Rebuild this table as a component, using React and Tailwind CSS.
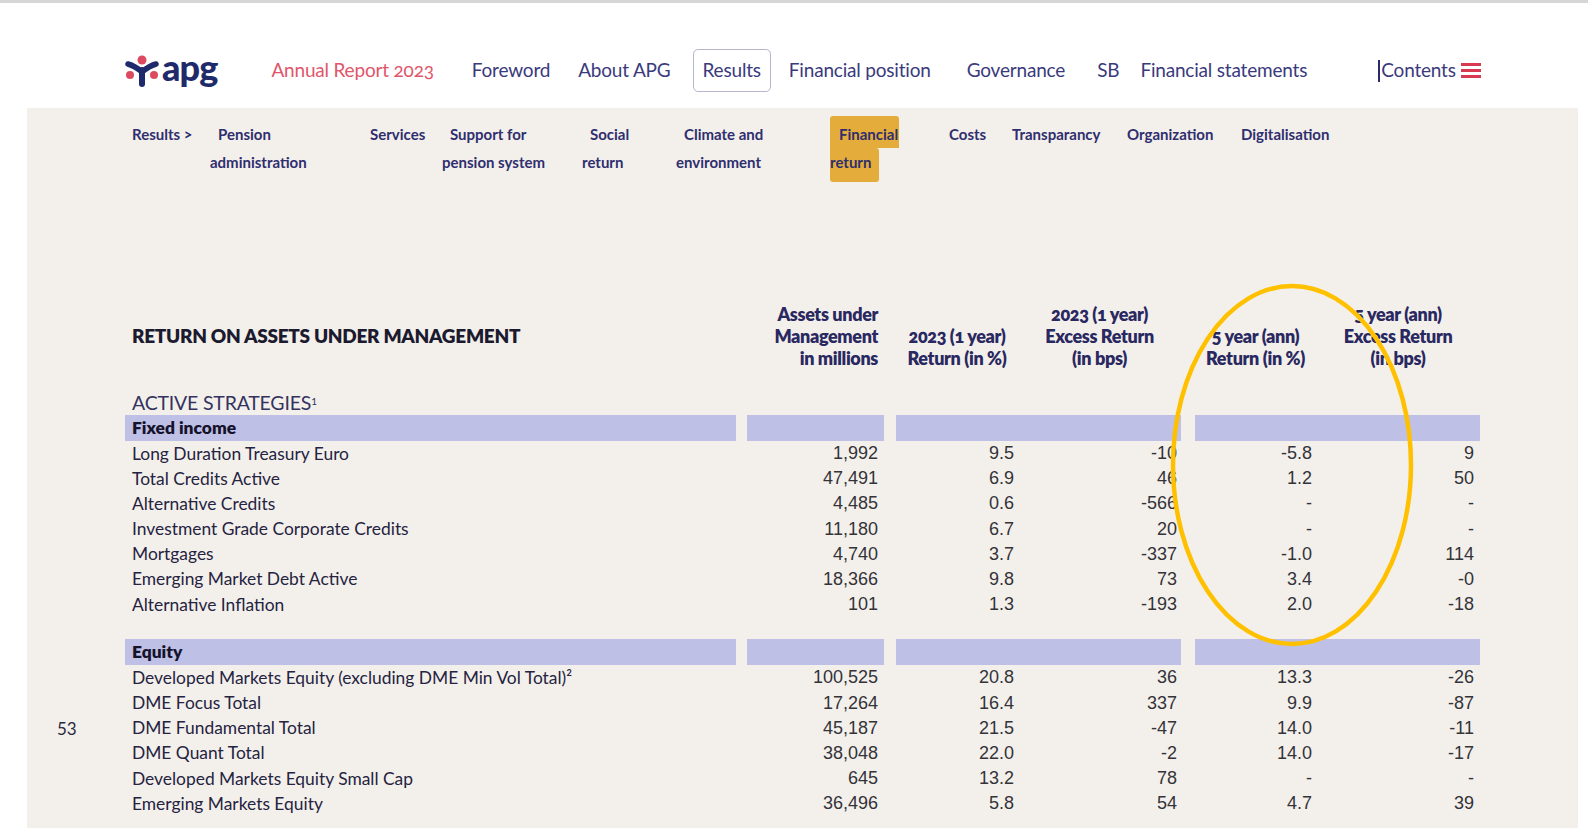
import React from 'react';

const fixedIncome = [
  ['Long Duration Treasury Euro', '1,992', '9.5', '-10', '-5.8', '9'],
  ['Total Credits Active', '47,491', '6.9', '46', '1.2', '50'],
  ['Alternative Credits', '4,485', '0.6', '-566', '-', '-'],
  ['Investment Grade Corporate Credits', '11,180', '6.7', '20', '-', '-'],
  ['Mortgages', '4,740', '3.7', '-337', '-1.0', '114'],
  ['Emerging Market Debt Active', '18,366', '9.8', '73', '3.4', '-0'],
  ['Alternative Inflation', '101', '1.3', '-193', '2.0', '-18'],
];

const equity = [
  ['Developed Markets Equity (excluding DME Min Vol Total)²', '100,525', '20.8', '36', '13.3', '-26'],
  ['DME Focus Total', '17,264', '16.4', '337', '9.9', '-87'],
  ['DME Fundamental Total', '45,187', '21.5', '-47', '14.0', '-11', '53'],
  ['DME Quant Total', '38,048', '22.0', '-2', '14.0', '-17'],
  ['Developed Markets Equity Small Cap', '645', '13.2', '78', '-', '-'],
  ['Emerging Markets Equity', '36,496', '5.8', '54', '4.7', '39'],
];

const subNav = [
  ['Pension', 'administration'],
  ['Services'],
  ['Support for', 'pension system'],
  ['Social', 'return'],
  ['Climate and', 'environment'],
  ['Financial', 'return', true],
  ['Costs'],
  ['Transparancy'],
  ['Organization'],
  ['Digitalisation'],
];

const Logo = () => (
  <div className="flex items-center gap-[3px]">
    <svg width="34" height="32" viewBox="0 0 34 32">
      <circle cx="17" cy="5" r="4.5" fill="#dc4a60" />
      <path d="M3 9 Q10 11 17 17 Q24 11 31 9" fill="none" stroke="#1f2a6b" strokeWidth="5.5" strokeLinecap="round" />
      <path d="M17 15 V29" stroke="#1f2a6b" strokeWidth="6" strokeLinecap="round" />
      <circle cx="5" cy="20" r="4" fill="#dc4a60" />
      <circle cx="29" cy="20" r="4" fill="#dc4a60" />
    </svg>
    <span className="-mt-[8px] text-[36px] leading-none font-black tracking-tight text-[#1f2a6b]">apg</span>
  </div>
);

const num = "font-['Liberation_Sans',Arial,sans-serif] text-[18px] text-[#333338]";

const Row = ({ cells }) => (
  <div className="flex h-[25.2px] items-center">
    <div className="w-[68px] text-[17px] text-[#2b2940]">{cells[6] || ''}</div>
    <div className="w-[611px] pl-[7px] text-[17.4px] text-[#25233f]">{cells[0]}</div>
    <div className={`ml-[11px] w-[137px] pr-[6px] text-right ${num}`}>{cells[1]}</div>
    <div className={`ml-[12px] flex w-[285px] ${num}`}>
      <div className="w-[122px] pr-[4px] text-right">{cells[2]}</div>
      <div className="w-[163px] pr-[4px] text-right">{cells[3]}</div>
    </div>
    <div className={`ml-[14px] flex w-[285px] ${num}`}>
      <div className="w-[121px] pr-[4px] text-right">{cells[4]}</div>
      <div className="w-[164px] pr-[6px] text-right">{cells[5]}</div>
    </div>
  </div>
);

const Band = ({ label }) => (
  <div className="flex h-[26px] items-center">
    <div className="w-[68px]" />
    <div className="flex h-full w-[611px] items-center bg-[#bfc0e6] pl-[7px] text-[17.4px] font-extrabold text-[#15132b]">{label}</div>
    <div className="ml-[11px] h-full w-[137px] bg-[#bfc0e6]" />
    <div className="ml-[12px] h-full w-[285px] bg-[#bfc0e6]" />
    <div className="ml-[14px] h-full w-[285px] bg-[#bfc0e6]" />
  </div>
);

const HeadCell = ({ lines, className }) => (
  <div className={`flex flex-col justify-end text-[18px] leading-[22px] font-extrabold tracking-[-0.02em] oldstyle-nums text-[#2a2860] ${className}`}>
    {lines.map((l) => (
      <div key={l}>{l}</div>
    ))}
  </div>
);

export default function App() {
  return (
    <div className="min-h-screen bg-white font-['Lato',sans-serif]">
      <div className="h-[3px] bg-[#d6d6d6]" />

      {/* top navigation */}
      <header className="flex h-[105px] items-center pl-[125px] pt-[30px] text-[19px] tracking-[-0.01em] text-[#3a3a7c]">
        <Logo />
        <span className="ml-[54px] text-[#e0566b] oldstyle-nums">Annual Report 2023</span>
        <span className="ml-[38px]">Foreword</span>
        <span className="ml-[28px]">About APG</span>
        <span className="ml-[22px] rounded-[5px] border-[1.5px] border-[#b7b6cf] px-[9px] py-[6px]">Results</span>
        <span className="ml-[18px]">Financial position</span>
        <span className="ml-[36px]">Governance</span>
        <span className="ml-[32px]">SB</span>
        <span className="ml-[21px]">Financial statements</span>
        <span className="ml-[71px] flex items-center">
          <span className="mr-[1px] h-[22px] w-[2px] bg-[#2a2a6a]" />
          Contents
          <span className="ml-[5px] flex flex-col gap-[3px]">
            <span className="h-[3px] w-[20px] bg-[#d83a52]" />
            <span className="h-[3px] w-[20px] bg-[#d83a52]" />
            <span className="h-[3px] w-[20px] bg-[#d83a52]" />
          </span>
        </span>
      </header>

      {/* content panel */}
      <div className="relative ml-[27px] w-[1551px] bg-[#f3f0ec] pb-[40px] pl-[30px] pt-[12px]">
        <div className="grid grid-cols-[78px_152px_80px_140px_94px_154px_111px_63px_115px_114px_auto] pl-[75px] text-[15px] leading-[28px] font-bold text-[#2f2e6e]">
          <div>Results &gt;</div>
          {subNav.map(([a, b, active]) =>
            active ? (
              <div key={a} className="flex flex-col items-start">
                <div className="-mt-[4px] rounded-t-[3px] bg-[#e4ad3b] pl-[9px] pr-[1px] pt-[4px]">{a}</div>
                <div className="rounded-b-[3px] rounded-tr-[3px] bg-[#e4ad3b] pb-[6px] pr-[8px]">{b}</div>
              </div>
            ) : (
              <div key={a}>
                <div className="pl-[8px]">{a}</div>
                {b && <div>{b}</div>}
              </div>
            )
          )}
        </div>

        {/* table header */}
        <div className="mt-[121px] flex items-stretch">
          <div className="w-[68px]" />
          <div className="flex w-[611px] items-center pl-[7px] text-[19px] font-extrabold tracking-[-0.015em] text-[#1c1a2e]">
            RETURN ON ASSETS UNDER MANAGEMENT
          </div>
          <HeadCell className="ml-[11px] w-[137px] pr-[6px] text-right" lines={['Assets under', 'Management', 'in millions']} />
          <HeadCell className="ml-[12px] w-[122px] text-center" lines={['2023 (1 year)', 'Return (in %)']} />
          <HeadCell className="w-[163px] text-center" lines={['2023 (1 year)', 'Excess Return', '(in bps)']} />
          <HeadCell className="ml-[14px] w-[121px] text-center" lines={['5 year (ann)', 'Return (in %)']} />
          <HeadCell className="w-[164px] text-center" lines={['5 year (ann)', 'Excess Return', '(in bps)']} />
        </div>

        <div className="mt-[22px] flex">
          <div className="w-[68px]" />
          <div className="pl-[7px] text-[19.5px] leading-[24px] tracking-[-0.01em] text-[#34335f]">
            ACTIVE STRATEGIES<sup className="text-[10px]">1</sup>
          </div>
        </div>

        <Band label="Fixed income" />
        {fixedIncome.map((r) => (
          <Row key={r[0]} cells={r} />
        ))}

        <div className="h-[22px]" />
        <Band label="Equity" />
        {equity.map((r) => (
          <Row key={r[0]} cells={r} />
        ))}

        {/* highlight ring */}
        <svg className="absolute left-[1141px] top-[173px]" width="248" height="368" viewBox="0 0 248 368">
          <ellipse cx="124" cy="184" rx="119" ry="179" fill="none" stroke="#ffc000" strokeWidth="4.5" />
        </svg>
      </div>
    </div>
  );
}
